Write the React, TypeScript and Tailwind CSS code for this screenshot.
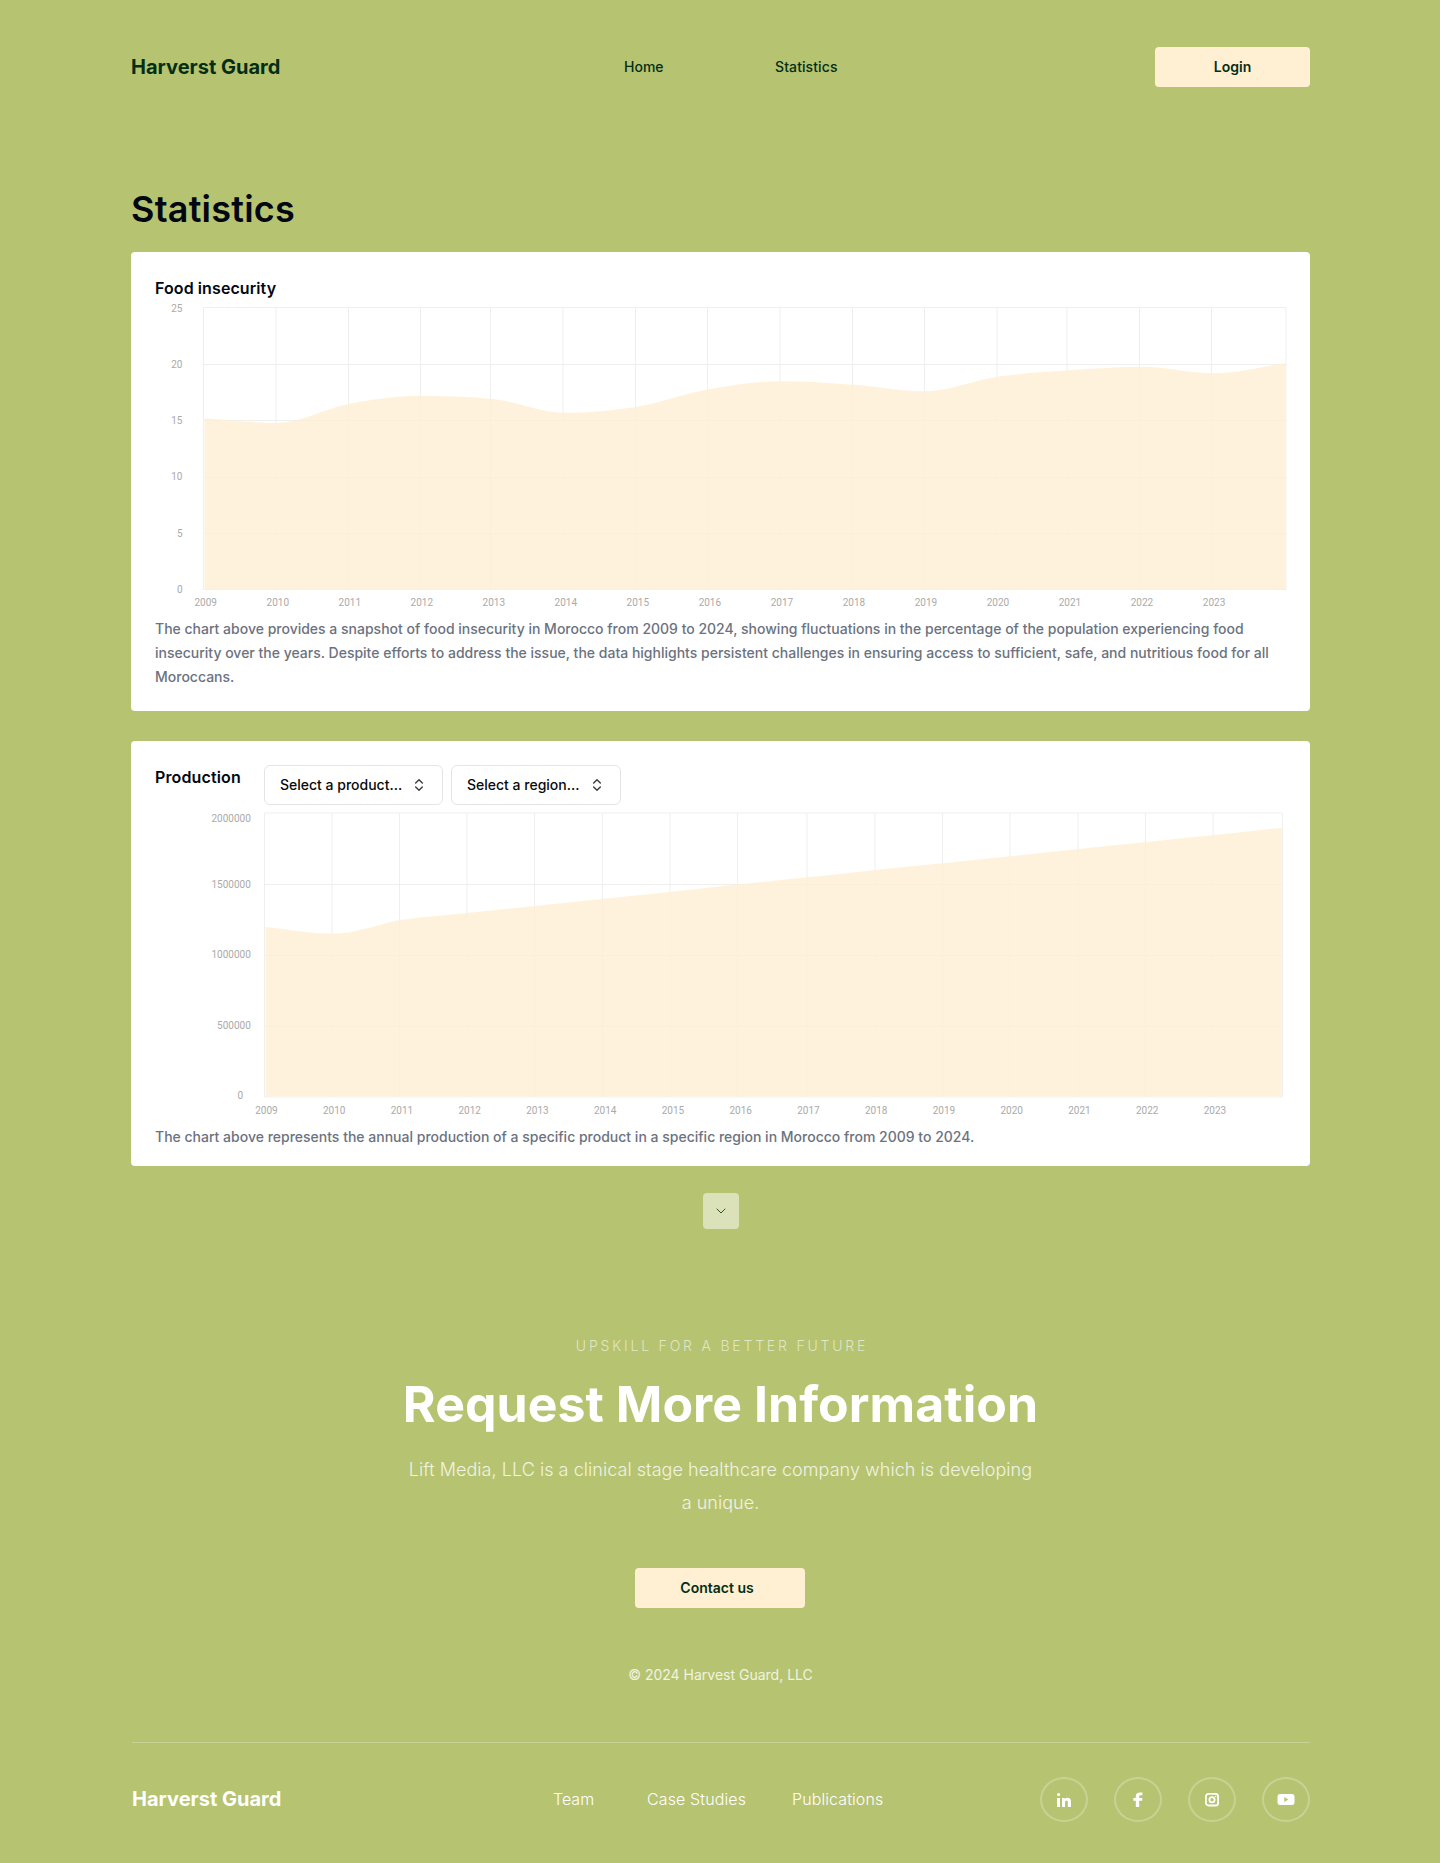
import React from "react";
import { ChevronsUpDown, ChevronDown } from "lucide-react";

type Pt = [number, number];

// Monotone cubic interpolation through the given points.
function monotone(pts: Pt[]): string {
  const n = pts.length;
  const slope: number[] = [];
  for (let i = 0; i < n - 1; i++) slope.push((pts[i + 1][1] - pts[i][1]) / (pts[i + 1][0] - pts[i][0]));
  const m: number[] = [slope[0]];
  for (let i = 1; i < n - 1; i++) {
    const a = slope[i - 1];
    const b = slope[i];
    m.push(a * b <= 0 ? 0 : Math.sign(a) * Math.min(Math.abs(a), Math.abs(b), Math.abs(a + b) / 4) * 2);
  }
  m.push(slope[n - 2]);
  let d = `M${pts[0][0]} ${pts[0][1]}`;
  for (let i = 0; i < n - 1; i++) {
    const h = (pts[i + 1][0] - pts[i][0]) / 3;
    d += `C${pts[i][0] + h} ${pts[i][1] + m[i] * h} ${pts[i + 1][0] - h} ${pts[i + 1][1] - m[i + 1] * h} ${pts[i + 1][0]} ${pts[i + 1][1]}`;
  }
  return d;
}

const years = Array.from({ length: 15 }, (_, i) => 2009 + i);

type ChartProps = {
  height: number;
  gridX: number[];
  gridY: number[];
  areaX: [number, number];
  areaBottom: number;
  values: number[];
  yLabels: { text: string; x: number; y: number }[];
  labelX: number;
  labelStep: number;
  labelY: number;
};

function AreaChart(p: ChartProps) {
  const step = (p.areaX[1] - p.areaX[0]) / (p.values.length - 1);
  const pts = p.values.map((v, i): Pt => [p.areaX[0] + i * step, v]);
  const left = p.gridX[0];
  const right = p.gridX[p.gridX.length - 1];
  const top = p.gridY[0];
  const bottom = p.gridY[p.gridY.length - 1];
  return (
    <svg width="1131" height={p.height} className="block overflow-visible font-['Roboto',sans-serif] text-[10px]">
      <g stroke="#efefef" strokeWidth="1">
        {p.gridX.map((x) => (
          <line key={x} x1={x} x2={x} y1={top} y2={bottom} />
        ))}
        {p.gridY.map((y) => (
          <line key={y} x1={left} x2={right} y1={y} y2={y} />
        ))}
      </g>
      <path d={`${monotone(pts)}V${p.areaBottom}H${p.areaX[0]}Z`} fill="#ffefd3" fillOpacity="0.8" />
      <g fill="#aaaaaa">
        {p.yLabels.map((l) => (
          <text key={l.text} x={l.x} y={l.y} textAnchor="end">
            {l.text}
          </text>
        ))}
        {years.map((year, i) => (
          <text key={year} x={p.labelX + i * p.labelStep} y={p.labelY}>
            {year}
          </text>
        ))}
      </g>
    </svg>
  );
}

function Select({ label, width }: { label: string; width: string }) {
  return (
    <button className={`flex h-10 items-center justify-between rounded-md border border-[#e4e4e7] bg-white pr-[15px] pl-[15px] text-sm font-medium text-[#09090b] ${width}`}>
      <span>{label}</span>
      <ChevronsUpDown className="size-4 opacity-80" />
    </button>
  );
}

function Social({ children }: { children: React.ReactNode }) {
  return (
    <a className="flex h-[45px] w-12 items-center justify-center rounded-[50%] border-2 border-white/25 text-white">{children}</a>
  );
}

export default function App() {
  return (
    <div className="h-[1863px] w-[1440px] overflow-hidden bg-[#b6c370] pr-[130px] pl-[131px] font-['Inter',sans-serif]">
      <header className="flex h-[134px] items-center">
        <div className="w-[493px] text-xl leading-6 font-bold text-[#032e15]">Harverst Guard</div>
        <nav className="flex flex-1 text-sm font-medium text-[#032e15]">
          <a className="w-[151px]">Home</a>
          <a className="tracking-[0.1px]">Statistics</a>
        </nav>
        <button className="h-10 w-[155px] rounded bg-[#ffefd3] text-sm font-semibold text-[#032e15]">Login</button>
      </header>

      <main>
        <h1 className="mt-[55px] h-[63px] text-4xl leading-10 font-semibold tracking-[0.22px] text-[#030712]">Statistics</h1>

        <section className="h-[459px] rounded bg-white px-6 pt-6">
          <h2 className="h-[31px] text-base leading-6 font-semibold tracking-[0.09px] text-[#030712]">Food insecurity</h2>
          <AreaChart
            height={310}
            gridX={[48.5, 121, 193.5, 265.5, 335.5, 408, 480.5, 552.5, 625, 697.5, 769.5, 842, 912, 984.5, 1056.5, 1131]}
            gridY={[0.5, 57.5, 113.5, 170.5, 226.5, 282.5]}
            areaX={[49.5, 1130.5]}
            areaBottom={282}
            values={[111.3, 116, 97, 88.8, 92, 105.8, 99.7, 82.3, 74.2, 77.7, 84.3, 69.7, 63.3, 59.7, 66.3, 56.3]}
            yLabels={[
              { text: "25", x: 27.5, y: 5 },
              { text: "20", x: 27.5, y: 61 },
              { text: "15", x: 27.5, y: 117.4 },
              { text: "10", x: 27.5, y: 173.4 },
              { text: "5", x: 27.5, y: 229.5 },
              { text: "0", x: 27.5, y: 286 },
            ]}
            labelX={39.5}
            labelStep={72.02}
            labelY={299.3}
          />
          <p className="text-sm leading-6 font-medium text-[#6b7280]">
            The chart above provides a snapshot of food insecurity in Morocco from 2009 to 2024, showing fluctuations in the percentage of the population experiencing food insecurity over the years. Despite efforts to address the issue, the data highlights persistent challenges in ensuring access to sufficient, safe, and nutritious food for all Moroccans.
          </p>
        </section>

        <section className="mt-[30px] h-[425px] rounded bg-white px-6 pt-6">
          <div className="flex h-[47px] items-start gap-2">
            <h2 className="w-[101px] text-base leading-6 font-semibold tracking-[0.14px] text-[#030712]">Production</h2>
            <Select label="Select a product..." width="w-[179px]" />
            <Select label="Select a region..." width="w-[170px]" />
          </div>
          <AreaChart
            height={313}
            gridX={[109.5, 177, 244.5, 312, 379.5, 447.5, 515, 582.5, 652, 720, 787.5, 855, 923, 990.5, 1058, 1127.5]}
            gridY={[1, 72.5, 143.5, 214.5, 285]}
            areaX={[110.5, 1126.7]}
            areaBottom={284.5}
            values={[115, 121.8, 108, 100.8, 93.7, 86.7, 79.7, 72.3, 65.3, 58, 51.3, 44.3, 37, 30, 23, 15.7]}
            yLabels={[
              { text: "2000000", x: 95.8, y: 10.2 },
              { text: "1500000", x: 95.8, y: 75.6 },
              { text: "1000000", x: 95.8, y: 146 },
              { text: "500000", x: 95.8, y: 217.4 },
              { text: "0", x: 88, y: 287.2 },
            ]}
            labelX={100.2}
            labelStep={67.75}
            labelY={301.7}
          />
          <p className="text-sm leading-6 font-medium text-[#6b7280]">
            The chart above represents the annual production of a specific product in a specific region in Morocco from 2009 to 2024.
          </p>
        </section>

        <button className="mx-auto mt-[27px] flex size-9 items-center justify-center rounded bg-white/50 text-[#032e15]">
          <ChevronDown className="size-4" strokeWidth={1.2} />
        </button>
      </main>

      <footer className="text-white">
        <div className="flex flex-col items-center text-center">
          <div className="mt-[107px] pl-[3px] text-sm leading-5 font-light tracking-[2.8px] text-white/60">UPSKILL FOR A BETTER FUTURE</div>
          <div className="mt-[18px] text-[50px] leading-[60px] font-bold tracking-[0.04px]">Request More Information</div>
          <p className="mt-[19px] w-[634px] text-lg leading-[33px] font-light tracking-[0.05px] text-white/80">
            Lift Media, LLC is a clinical stage healthcare company which is developing
            <br />a unique.
          </p>
          <button className="mt-[49px] mr-px h-10 w-[170px] rounded bg-[#ffefd3] pr-[6px] text-sm font-semibold text-[#032e15]">Contact us</button>
          <div className="mt-[57px] text-sm leading-5 text-white/80">© 2024 Harvest Guard, LLC</div>
        </div>
        <div className="mt-[57px] ml-px border-t border-white/25" />
        <div className="mt-[34px] flex h-[45px] items-center">
          <div className="mb-0.5 w-[422px] pl-px text-xl leading-6 font-bold">Harverst Guard</div>
          <nav className="mb-px flex flex-1 text-base font-light">
            <a className="w-[94px]">Team</a>
            <a className="w-[145px] tracking-[0.12px]">Case Studies</a>
            <a className="tracking-[0.1px]">Publications</a>
          </nav>
          <div className="flex gap-[26px]">
            <Social>
              <svg width="16" height="16" viewBox="0 0 16 16" fill="currentColor">
                <path d="M1 6h3v9H1zM1 2.500a1.600 1.600 0 1 1 3.200 0a1.600 1.600 0 1 1-3.200 0zM6 6h2.800v1.200C9.400 6.300 10.400 5.800 11.600 5.800c2.400 0 3.400 1.500 3.400 4V15h-3.200v-4.600c0-1.200-.4-2-1.300-2c-1 0-1.400.8-1.400 2V15H6z" />
              </svg>
            </Social>
            <Social>
              <svg width="16" height="16" viewBox="0 0 16 16" fill="currentColor">
                <path d="M5.800 15V8.800H3.300V6h2.500V4.400C5.800 2 7.200.6 9.700.6h2.700v2.600h-1.700C9.600 3.200 9.200 3.600 9.200 4.500V6h3.100v2.800H9.200V15z" />
              </svg>
            </Social>
            <Social>
              <svg width="16" height="16" viewBox="0 0 16 16" fill="none" stroke="currentColor" strokeWidth="1.8">
                <rect x="1.900" y="1.900" width="12.200" height="11.600" rx="2.600" />
                <circle cx="8" cy="7.700" r="2.600" />
                <circle cx="11.600" cy="4.500" r=".8" fill="currentColor" stroke="none" />
              </svg>
            </Social>
            <Social>
              <svg width="18" height="16" viewBox="0 0 18 16" fill="currentColor">
                <path fillRule="evenodd" d="M3 2h12q2.500 0 2.500 3v5q0 3-2.500 3H3Q.5 13 .5 10V5Q.5 2 3 2zM7.300 5.100v4.800l4-2.400z" />
              </svg>
            </Social>
          </div>
        </div>
      </footer>
    </div>
  );
}
